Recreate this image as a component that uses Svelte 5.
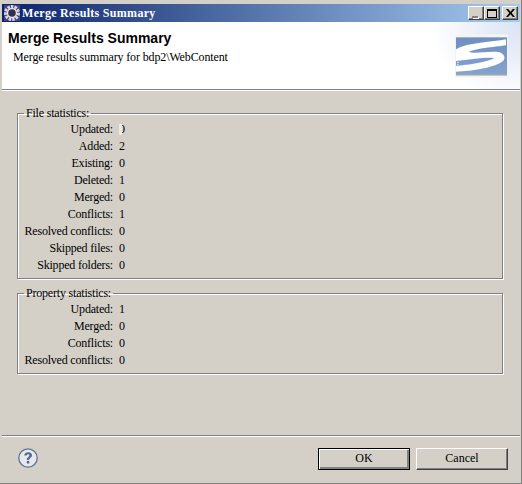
<script>
const fileStats = [
	["Updated:", "0"],
	["Added:", "2"],
	["Existing:", "0"],
	["Deleted:", "1"],
	["Merged:", "0"],
	["Conflicts:", "1"],
	["Resolved conflicts:", "0"],
	["Skipped files:", "0"],
	["Skipped folders:", "0"],
]
const propStats = [
	["Updated:", "1"],
	["Merged:", "0"],
	["Conflicts:", "0"],
	["Resolved conflicts:", "0"],
]
const groups = [
	{ title: "File statistics:", rows: fileStats },
	{ title: "Property statistics:", rows: propStats },
]
</script>

<div class="window">
	<div class="titlebar">
		<svg class="app_icon" width="16" height="16" viewBox="0 0 16 16">
			<rect width="16" height="16" fill="#4a3f7c" />
			<circle cx="8" cy="8" r="6.500" fill="none" stroke="#d9d7e2" stroke-width="3" stroke-dasharray="2.500 1.100" />
			<circle cx="8" cy="8" r="5.200" fill="#e6e4ec" />
			<circle cx="8" cy="8" r="3.800" fill="#34324a" />
		</svg>
		<span class="caption">Merge Results Summary</span>
		<div class="controls">
			<button class="ctl" aria-label="Minimize"><i class="min"></i></button>
			<button class="ctl" aria-label="Maximize"><i class="max"></i></button>
			<button class="ctl close" aria-label="Close">
				<svg width="9" height="8" viewBox="0 0 9 8">
					<path d="M0 0h2.200L4.500 2.800 6.800 0H9L5.700 4 9 8H6.800L4.500 5.200 2.200 8H0l3.300-4z" fill="#000" />
				</svg>
			</button>
		</div>
	</div>

	<div class="banner">
		<div class="banner_text">
			<h1>Merge Results Summary</h1>
			<p>Merge results summary for bdp2\WebContent</p>
		</div>
		<svg class="logo" width="53" height="44" viewBox="0 0 54 44">
			<defs>
				<linearGradient id="logo_blue" x1="0" y1="0" x2="0" y2="1">
					<stop offset="0" stop-color="#6f8fc0" />
					<stop offset="1" stop-color="#86a3cf" />
				</linearGradient>
			</defs>
			<rect width="54" height="44" fill="#f5f5ee" />
			<rect x="1" y="40" width="52" height="2" fill="#b0b0a6" />
			<rect x="1" y="3" width="52" height="38" fill="url(#logo_blue)" />
			<path d="M52 5C38 8 14 8 1 15V27C14 26 30 23 40 24 34 28 14 31 1 32V38C18 37 40 34 49 27 52 24 50 19 44 18 34 17 20 20 14 18 20 14 40 13 52 11Z" fill="#fff" />
			<rect x="2" y="28" width="2" height="1" fill="#d5dfee" />
			<rect x="2" y="30" width="2" height="1" fill="#d5dfee" />
		</svg>
	</div>
	<div class="rule"></div>

	<div class="content">
		{#each groups as group}
			<fieldset class="group">
				<legend>{group.title}</legend>
				{#each group.rows as row, i}
					<div class="row">
						<span class="label">{row[0]}</span>
						<span class="value" class:glitch={group === groups[0] && i === 0}>{row[1]}</span>
					</div>
				{/each}
			</fieldset>
		{/each}
	</div>

	<div class="rule"></div>

	<div class="footer">
		<svg class="help" width="20" height="20" viewBox="0 0 20 20">
			<circle cx="10" cy="10" r="9.200" fill="#e8e8ec" stroke="#5c7698" stroke-width="1.300" />
			<path d="M6.300 7.600C6.300 5.200 8.100 4.200 10.100 4.200c2.300 0 3.900 1.200 3.900 3.100 0 2.700-2.800 2.600-2.800 4.700H8.800c0-3.200 2.500-3 2.500-4.600 0-.8-.5-1.200-1.300-1.200-.9 0-1.300.6-1.300 1.400z" fill="#54698f" />
			<rect x="8.800" y="13" width="2.500" height="2.500" fill="#54698f" />
		</svg>
		<div class="buttons">
			<button class="btn default">OK</button>
			<button class="btn">Cancel</button>
		</div>
	</div>
</div>

<style>
:global(body) {
	background: #d4d0c8;
}
.window {
	box-sizing: border-box;
	width: 522px;
	height: 484px;
	display: flex;
	flex-direction: column;
	background: #d4d0c8;
	padding: 4px 1px 1px 2px;
	border-right: 1px solid #808080;
	border-bottom: 1px solid #808080;
	font-family: "Liberation Serif", serif;
	font-size: 12px;
	color: #000;
}
.titlebar {
	box-sizing: border-box;
	height: 18px;
	flex: none;
	display: flex;
	align-items: center;
	padding: 0 2px;
	background: linear-gradient(to right, #0a246a, #a6caf0);
}
.app_icon {
	flex: none;
}
.caption {
	margin-left: 2px;
	color: #fff;
	font-weight: bold;
	font-size: 12px;
	letter-spacing: 0.3px;
}
.controls {
	margin-left: auto;
	display: flex;
}
.ctl {
	box-sizing: border-box;
	width: 16px;
	height: 14px;
	padding: 0;
	display: flex;
	align-items: center;
	justify-content: center;
	background: #d4d0c8;
	border: 1px solid;
	border-color: #fff #404040 #404040 #fff;
	box-shadow: inset -1px -1px 0 #808080;
}
.close {
	margin-left: 2px;
}
.min {
	width: 6px;
	height: 2px;
	background: #808080;
	box-shadow: 1px 1px 0 #fff;
	margin-top: 7px;
	margin-right: 2px;
}
.max {
	box-sizing: border-box;
	width: 10px;
	height: 9px;
	border: 1px solid #000;
	border-top-width: 2px;
}
.banner {
	height: 67px;
	flex: none;
	display: flex;
	justify-content: space-between;
	background: radial-gradient(ellipse 90px 80px at 100% 0, #d9e3f3 0, #eef2f9 55%, #fff 100%), #fff;
}
.banner_text {
	padding: 7px 0 0 6px;
}
h1 {
	margin: 0;
	font-family: "Liberation Sans", sans-serif;
	font-size: 14px;
	line-height: 18px;
	font-weight: bold;
}
p {
	margin: 3px 0 0 5px;
	line-height: 14px;
	letter-spacing: -0.13px;
}
.logo {
	margin: 12px 12px 0 0;
}
.rule {
	flex: none;
	height: 1px;
	background: #808080;
	border-bottom: 1px solid #fff;
}
.content {
	flex: 1;
	padding: 15px 17px 0 15px;
	display: flex;
	flex-direction: column;
	gap: 7px;
}
.group {
	margin: 0;
	padding: 1px 0 4px 0;
	border: 1px solid #808080;
	box-shadow: inset 1px 1px 0 #fff, 1px 1px 0 #fff;
}
legend {
	margin-left: 6px;
	padding: 0 2px;
	line-height: 14px;
	letter-spacing: -0.2px;
}
.row {
	display: flex;
	height: 17px;
	align-items: center;
}
.label {
	width: 95px;
	text-align: right;
	white-space: nowrap;
	letter-spacing: -0.2px;
}
.value {
	margin-left: 6px;
}
.glitch {
	position: relative;
}
.glitch::before {
	content: "";
	position: absolute;
	left: 0;
	top: 2px;
	width: 3px;
	height: 11px;
	background: #eceae4;
}
.footer {
	box-sizing: border-box;
	flex: none;
	height: 45px;
	display: flex;
	align-items: flex-start;
	justify-content: space-between;
	padding: 11px 12px 0 16px;
}
.buttons {
	display: flex;
	gap: 6px;
}
.btn {
	box-sizing: border-box;
	width: 92px;
	height: 22px;
	padding: 0 0 2px;
	font: inherit;
	background: #d4d0c8;
	border: 1px solid;
	border-color: #fff #404040 #404040 #fff;
	box-shadow: inset -1px -1px 0 #808080;
}
.default {
	border: 1px solid #000;
	box-shadow: inset 1px 1px 0 #fff, inset -2px -2px 0 #808080;
}
</style>
